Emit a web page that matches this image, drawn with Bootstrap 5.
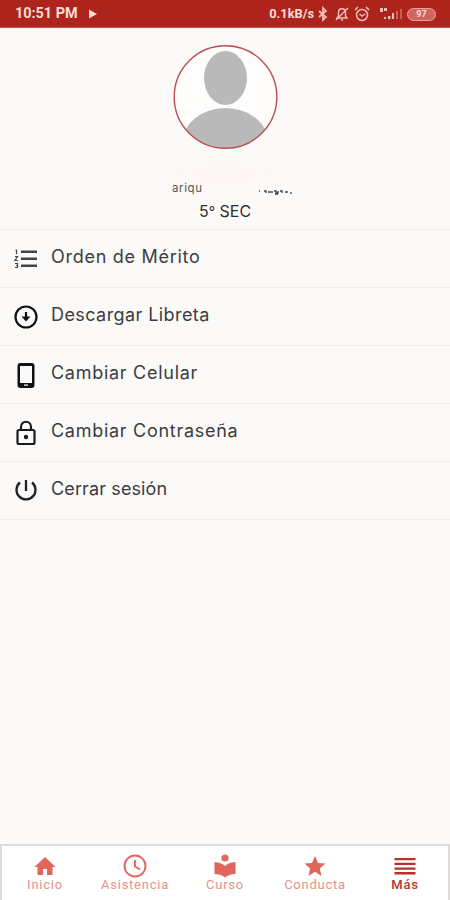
<!DOCTYPE html>
<html lang="es">
<head>
<meta charset="utf-8">
<meta name="viewport" content="width=device-width, initial-scale=1">
<title>Más</title>
<link href="https://cdn.jsdelivr.net/npm/bootstrap@5.3.0/dist/css/bootstrap.min.css" rel="stylesheet">
<style>
body{height:900px;background:#fbfaf8;font-family:Inter,sans-serif;overflow:hidden}
svg{display:block;flex:none;overflow:visible}
.statusbar{height:28px;background:#ad241c;color:#fbdcd6;border-bottom:1px solid #c0584f;font:700 14.4px/26px Roboto,sans-serif;padding:1px 14px 0 15px}
.rate{font-size:12.8px}
.bell{margin-left:6px}
.signal{margin-left:9px}
.battery{width:29px;height:13px;border:1.5px solid #eba79f;border-radius:7px;background:#cf665d;font-size:9px;line-height:10px}
.profile{height:202px;padding-top:17px;border-bottom:1px solid #efeeec}
.halo{height:44px;width:160px;padding:0 10px 0 27px;background:radial-gradient(closest-side,#fff5f3,#fbfaf8)}
.person-name{font-size:11.5px;line-height:14px;color:#555;letter-spacing:.6px}
.grade{font-size:16px;line-height:20px;color:#303030;margin-top:6px}
.menu-row{height:58px;padding:0 14px;background:transparent;color:#3c3c42;font-size:18px;line-height:24px;letter-spacing:.72px}
.list-group-flush>.menu-row,.list-group-flush>.menu-row:last-child{border:0;border-bottom:1px solid #efeeec}
.menu-row svg{margin-top:2px}
.menu-row span{margin:-3px 0 0 13px}
.menu-row .snug{letter-spacing:.42px}
.menu-row .tight{letter-spacing:.12px}
.tabs{height:56px;background:#fff;box-shadow:inset 2px 2px #dedcdb,inset -2px 0 #dedcdb}
.tab-item{width:90px;padding-top:10px;color:#e0665e;font:400 13px/14px Roboto,sans-serif;letter-spacing:.75px}
.tab-item span{color:#e5928c}
.tab-item.current,.tab-item.current span{color:#b4332f;font-weight:500}
</style>
<script src="https://cdn.jsdelivr.net/npm/bootstrap@5.3.0/dist/js/bootstrap.bundle.min.js"></script>
</head>
<body class="d-flex flex-column">
<header class="statusbar d-flex align-items-center flex-shrink-0">
<span>10:51 PM</span>
<svg class="ms-2" width="12" height="12" viewBox="0 0 12 12"><path d="M3 1.500l8 4.500-8 4.500z" fill="#fbdcd6"/></svg>
<span class="rate ms-auto">0.1kB/s</span>
<svg class="ms-1" width="10" height="14" viewBox="0 0 10 14" fill="none" stroke="#f3beb7" stroke-width="1.700"><path d="M1 4l7 6-3 3V1l3 3-7 6"/></svg>
<svg class="bell" width="16" height="16" viewBox="0 0 16 16" fill="none" stroke="#f3beb7" stroke-width="1.400"><path d="M3 12h10l-1.500-2V6.500c0-5-7-5-7 0V10zM7 14h2M2 14L14 2"/></svg>
<svg class="ms-1" width="16" height="16" viewBox="0 0 16 16" fill="none" stroke="#f3beb7" stroke-width="1.500"><circle cx="8" cy="9" r="5.500"/><path d="M1 4l3-3M15 4l-3-3M5.500 8L8 10l3-2"/></svg>
<svg class="signal" width="24" height="14" viewBox="0 0 24 14"><path d="M1 1h3v4H1zM5 1h3v3H5zM5 10h2v2H5zM9 9h2.500v3H9zM13 6h2v6h-2z" fill="#f3beb7"/><path d="M17 4h2v8h-2zM21 2h2v10h-2z" fill="#cc5f57"/></svg>
<span class="battery ms-1 text-center">97</span>
</header>
<section class="profile d-flex flex-column align-items-center flex-shrink-0">
<svg width="106" height="106" viewBox="0 0 106 106"><defs><clipPath id="face"><circle cx="53.500" cy="52" r="51"/></clipPath></defs><circle cx="53.500" cy="52" r="51.300" fill="#fefdfc"/><g clip-path="url(#face)" fill="#b9b9b9"><ellipse cx="53.500" cy="33" rx="21.500" ry="27"/><ellipse cx="53.500" cy="100" rx="44" ry="37"/></g><circle cx="53.500" cy="52" r="51.300" fill="none" stroke="#b74e50" stroke-width="1.400"/></svg>
<div class="halo d-flex align-items-end justify-content-between"><span class="person-name">ariqu</span><svg width="36" height="7" viewBox="0 0 36 7" fill="none" stroke="#444" stroke-width="1.300"><path d="M0 3h1M5 3h2v2M9 4h3M13 3v2M15 3h2v2h2V3M19 6h-3M21 3h2v2M26 4h3M32 4v2"/></svg></div>
<div class="grade">5<small>°</small> SEC</div>
</section>
<main class="list-group list-group-flush rounded-0">
<a class="menu-row list-group-item d-flex align-items-center"><svg width="24" height="24" viewBox="0 0 24 24"><path d="M7 2.500h16V5H7zM7 9.500h16V12H7zM7 16.500h16V19H7z" fill="#444"/><path d="M1.500 2h1v4M1 8.500h2.500L1 12.500h3M1 15.500h2.500v4H1M2 17.500h2" fill="none" stroke="#444" stroke-width="1.200"/></svg><span>Orden de Mérito</span></a>
<a class="menu-row list-group-item d-flex align-items-center"><svg width="24" height="24" viewBox="0 0 24 24" fill="none" stroke="#111" stroke-width="2.200"><circle cx="12" cy="11" r="10.500"/><path d="M12 6v6"/><path d="M7.500 10.500h9L12 15.500z" fill="#111" stroke="none"/></svg><span class="snug">Descargar Libreta</span></a>
<a class="menu-row list-group-item d-flex align-items-center"><svg width="24" height="26" viewBox="0 0 24 26"><path fill-rule="evenodd" d="M6.500 0h11q3 0 3 3v19q0 3-3 3h-11q-3 0-3-3V3q0-3 3-3zM6 3v17h12V3zM10 21.500v1.200h4v-1.200z" fill="#111"/></svg><span>Cambiar Celular</span></a>
<a class="menu-row list-group-item d-flex align-items-center"><svg width="24" height="26" viewBox="0 0 24 26" fill="none" stroke="#1b1b1b" stroke-width="2.200"><rect x="3.500" y="9" width="17" height="14" rx="1.500"/><path d="M7 9V6c0-7 10-7 10 0V9"/><circle cx="12" cy="16" r="2.200" fill="#1b1b1b" stroke="none"/></svg><span>Cambiar Contraseña</span></a>
<a class="menu-row list-group-item d-flex align-items-center"><svg width="24" height="24" viewBox="0 0 24 24" fill="none" stroke="#222" stroke-width="2.300"><path d="M12 0v11M6 2.500a9.500 9.500 0 1 0 12 0"/></svg><span class="tight">Cerrar sesión</span></a>
</main>
<nav class="tabs d-flex mt-auto flex-shrink-0">
<a class="tab-item d-flex flex-column align-items-center text-decoration-none"><svg width="24" height="24" viewBox="0 0 24 24" fill="currentColor"><path d="M10 21v-6h4v6h5.500v-8H22.500L12 3 1.500 13h3v8z"/></svg><span>Inicio</span></a>
<a class="tab-item d-flex flex-column align-items-center text-decoration-none"><svg width="24" height="24" viewBox="0 0 24 24" fill="none" stroke="currentColor" stroke-width="1.900"><circle cx="12" cy="12" r="10.500"/><path d="M12 6v6.500l5 3"/></svg><span>Asistencia</span></a>
<a class="tab-item d-flex flex-column align-items-center text-decoration-none"><svg width="24" height="24" viewBox="0 0 24 24" fill="currentColor"><circle cx="12" cy="4" r="3.600"/><path d="M12 12C9.600 9.800 6.500 8.300 1.500 8v12c4.500 0 8.100 1.300 10.500 3.500 2.400-2.200 6-3.500 10.500-3.500V8c-5 .3-8.100 1.800-10.500 4z"/></svg><span>Curso</span></a>
<a class="tab-item d-flex flex-column align-items-center text-decoration-none"><svg width="24" height="24" viewBox="0 0 24 24" fill="currentColor"><path d="M12 17.800L18.500 22l-1.700-7.500L22.500 9.500l-7.500-.6L12 2 9 8.900l-7.500.6 5.700 5L5.500 22z"/></svg><span>Conducta</span></a>
<a class="tab-item current d-flex flex-column align-items-center text-decoration-none"><svg width="24" height="24" viewBox="0 0 24 24" fill="currentColor"><path d="M1.500 4h21v2.300h-21zM1.500 8.700h21V11h-21zM1.500 13.400h21v2.300h-21zM1.500 18.100h21v2.300h-21z"/></svg><span>Más</span></a>
</nav>
</body>
</html>
